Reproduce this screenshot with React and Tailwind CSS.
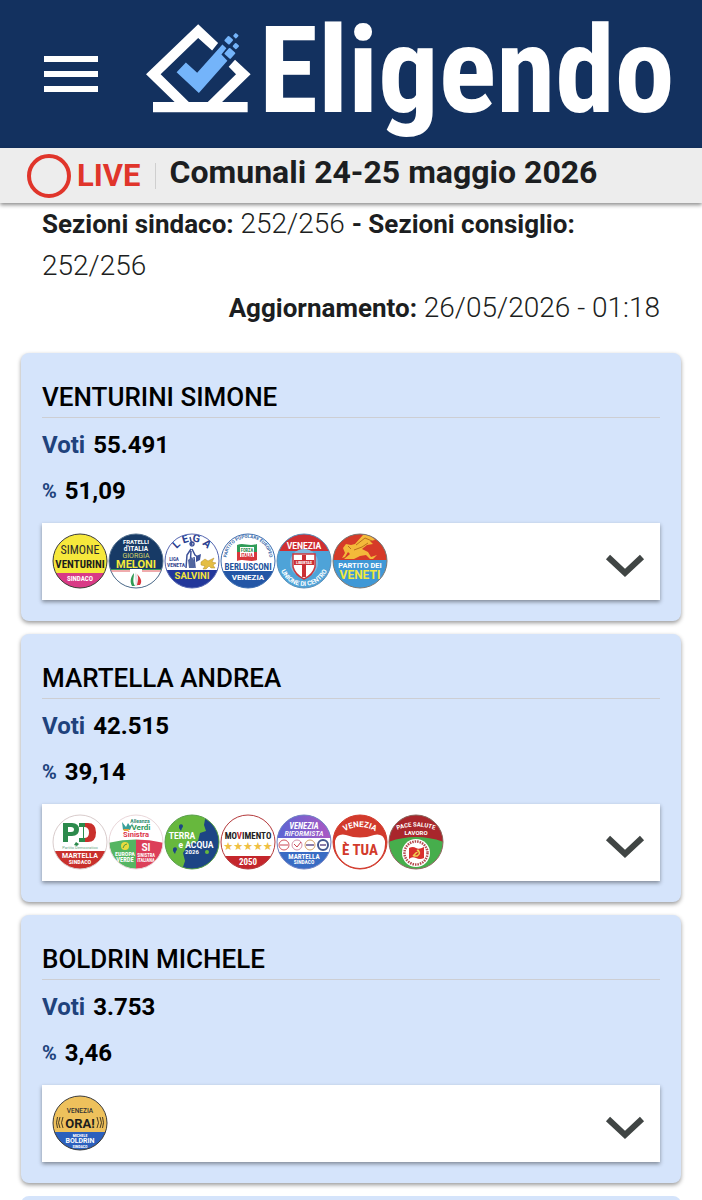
import React, { useState } from 'react';

const NARROW = "'Roboto Condensed', 'Liberation Sans', sans-serif";

// testo centrato dentro un contrassegno
function T({ y, size, fill = '#fff', x = 28, weight = 700, font = NARROW, children }) {
  return (
    <text x={x} y={y} fontSize={size} fill={fill} fontWeight={weight} fontFamily={font} textAnchor="middle">
      {children}
    </text>
  );
}

// testo che segue il bordo del contrassegno
function Arc({ id, d, size, fill, children }) {
  return (
    <>
      <path id={id} d={d} fill="none" />
      <text fontSize={size} fill={fill} fontWeight="700" fontFamily="Roboto, sans-serif" textAnchor="middle">
        <textPath href={`#${id}`} startOffset="50%">{children}</textPath>
      </text>
    </>
  );
}

function Contrassegno({ id, label, bg = '#fff', border, children }) {
  return (
    <svg viewBox="0 0 56 56" className="size-14 shrink-0" role="img" aria-label={label}>
      <clipPath id={`clip-${id}`}>
        <circle cx="28" cy="28" r="27" />
      </clipPath>
      <g clipPath={`url(#clip-${id})`}>
        <rect width="56" height="56" fill={bg} />
        {children}
      </g>
      <circle cx="28" cy="28" r="27" fill="none" stroke={border} strokeWidth="1" />
    </svg>
  );
}

function Venturini() {
  return (
    <Contrassegno id="venturini" label="Simone Venturini Sindaco" bg="#f6e83c" border="#3b3b3b">
      <rect y="40" width="56" height="16" fill="#d93a86" />
      <T y="21" size="12" fill="#2b2b2b" weight={400}>SIMONE</T>
      <T y="35" size="11" fill="#1d1d1d">VENTURINI</T>
      <T y="48" size="7">SINDACO</T>
    </Contrassegno>
  );
}

function Fdi() {
  return (
    <Contrassegno id="fdi" label="Fratelli d'Italia" bg="#173a66" border="#54718f">
      <rect y="36" width="56" height="20" fill="#fff" />
      <path d="M0 36.500h22M34 36.500h22" stroke="#3a9a5b" strokeWidth="1" />
      <path d="M0 38h22M34 38h22" stroke="#e0585a" strokeWidth="1" />
      <path d="M26 40c-4 5-4 9-2 13h3c-3-5-1-8-1-13z" fill="#2f9a54" />
      <path d="M28 39c-3 6 1 8-1 14h3c2-5-1-8-2-14z" fill="#e6e6e6" />
      <path d="M29 41c2 4 1 7 0 11h3c3-4 0-8-3-11z" fill="#d8363d" />
      <T y="11" size="6" font="Roboto, sans-serif">FRATELLI</T>
      <T y="17.500" size="6.500" font="Roboto, sans-serif">d'ITALIA</T>
      <T y="24.500" size="7" fill="#d8d76a" weight={400} font="Roboto, sans-serif">GIORGIA</T>
      <T y="34.500" size="11" fill="#f4ea3a" font="Roboto, sans-serif">MELONI</T>
    </Contrassegno>
  );
}

function Lega() {
  return (
    <Contrassegno id="lega" label="Lega Salvini" border="#5566b0">
      <rect y="37" width="56" height="19" fill="#22379a" />
      <path d="M26 4l2 8M28 13a2 2 0 1 1 .1 0M27 16l-4 6-1 13M28 16l3 6 4 3M30 24l1 11M27 18l-1 16" fill="none" stroke="#3d5198" strokeWidth="1.500" />
      <path d="M24 27l4-3 3 5-1 6h-5z" fill="#52669f" />
      <path d="M32 23l5-2-1 6-4 2z" fill="#3d5198" />
      <path d="M37 29l4-3 3 2 6-3-2 4 4 1-3 2 2 3h-4l-2-2-3 3h-3l2-3-4-1z" fill="#e4be45" stroke="#b68c25" strokeWidth=".5" />
      <Arc id="arc-lega" d="M9.500 22A19.500 19.500 0 0 1 46.500 22" size="11" fill="#2b3f91">L E G A</Arc>
      <T x={10} y="28" size="5" fill="#34478f">LIGA</T>
      <T x={12} y="34" size="5.500" fill="#34478f">VENETA</T>
      <T y="46" size="9.500" fill="#f3e53b" font="Roboto, sans-serif">SALVINI</T>
    </Contrassegno>
  );
}

function ForzaItalia() {
  return (
    <Contrassegno id="fi" label="Forza Italia Berlusconi Venezia" border="#3c6db0">
      <rect y="38" width="56" height="18" fill="#2356a6" />
      <Arc id="arc-fi" d="M7 31A21.500 21.500 0 1 1 49 31" size="4.500" fill="#3466a8">PARTITO POPOLARE EUROPEO</Arc>
      <path d="M17 12c7-3 11 2 20-1v8H17z" fill="#2f9c58" />
      <path d="M17 19h20v8c-8 3-12-2-20 1z" fill="#d8373c" />
      <path d="M20 14h14v10H20z" fill="#fff" />
      <T x={27} y="18.500" size="4.500" fill="#2f8b50">FORZA</T>
      <T x={27} y="23.500" size="4.500" fill="#d8373c">ITALIA</T>
      <T y="36.500" size="9" fill="#24539c">BERLUSCONI</T>
      <T y="47" size="8" font="Roboto, sans-serif">VENEZIA</T>
    </Contrassegno>
  );
}

function Udc() {
  return (
    <Contrassegno id="udc" label="Venezia Unione di Centro" bg="#4ea3d8" border="#5b8fb8">
      <rect width="56" height="18" fill="#cf2e32" />
      <circle cx="28" cy="30" r="14" fill="#7fb9df" />
      <T y="16" size="8.500" font="Roboto, sans-serif">VENEZIA</T>
      <path d="M17 21h22v13q-2 8-11 12-9-4-11-12z" fill="#fff" stroke="#c9383d" strokeWidth="1.500" />
      <path d="M26 22h4v22h-4z" fill="#cc3035" />
      <path d="M18 27h20v5H18z" fill="#cc3035" />
      <T y="31" size="4">LIBERTAS</T>
      <Arc id="arc-udc" d="M3 28A25 25 0 0 0 53 28" size="6.500" fill="#fff">UNIONE DI CENTRO</Arc>
    </Contrassegno>
  );
}

function Veneti() {
  return (
    <Contrassegno id="veneti" label="Partito dei Veneti" bg="#3f98d6" border="#7d7770">
      <rect width="56" height="27" fill="#d63a28" />
      <path d="M10 25l3-5-2-5 3-4 5 1 4-1 8-9c5-1 9 1 12 5l-5 1 3 3-6 1-5 4 6 3 3 5 6-2-4 4H38l-4-4-6 1-6 3H12l6-5-2-2-3 5z" fill="#f3b93a" />
      <path d="M24 12l9-7 7 3M22 17l8-3 6-4M16 13l3 3" fill="none" stroke="#b96d1e" strokeWidth="1" />
      <T y="35" size="7.500" font="Roboto, sans-serif">PARTITO DEI</T>
      <T y="46" size="12" fill="#f1e83c" font="Roboto, sans-serif">VENETI</T>
    </Contrassegno>
  );
}

function Pd() {
  return (
    <Contrassegno id="pd" label="Partito Democratico" border="#d9cccc">
      <rect y="37" width="56" height="19" fill="#c9302c" />
      <path d="M11 28V9h9q7 0 7 6.500T20 22h-4v6zM16 13v5h3q3 0 3-2.500T19 13z" fill="#2c8a4c" fillRule="evenodd" />
      <path d="M27 9h9v19h-9v-4h4V13h-4z" fill="#2c8a4c" />
      <path d="M27 13h4v11h-4z" fill="#fff" />
      <path d="M33 9h3q8 0 8 9.500T36 28h-3z" fill="#c9302c" />
      <path d="M32 13q5 0 5 5.500T32 24z" fill="#fff" />
      <path d="M22 31l2-3 3 2-2 2z" fill="#2c8a4c" />
      <T y="35" size="4" fill="#70a786" weight={400} font="Roboto, sans-serif">Partito Democratico</T>
      <T y="44" size="7" font="Roboto, sans-serif">MARTELLA</T>
      <T y="50" size="6">SINDACO</T>
    </Contrassegno>
  );
}

function Avs() {
  return (
    <Contrassegno id="avs" label="Alleanza Verdi Sinistra" border="#ead7da">
      <rect y="25" width="28" height="31" fill="#55b562" />
      <rect x="28" y="25" width="28" height="31" fill="#dc3f59" />
      <path d="M0 29Q28 22 56 29V22H0z" fill="#fff" />
      <path d="M14 8l4 5 2-4 2 3 3-3-3 7h-7z" fill="#38a09a" />
      <path d="M15 15h7l-2 2h-4z" fill="#e6a23c" />
      <T x={32} y="8.500" size="5" fill="#318c72" font="Roboto, sans-serif">Alleanza</T>
      <T x={33} y="15.500" size="8" fill="#2c985a" font="Roboto, sans-serif">Verdi</T>
      <T x={28} y="23" size="7.500" fill="#dc354c" font="Roboto, sans-serif">Sinistra</T>
      <circle cx="17" cy="32" r="4" fill="#eadb3e" />
      <path d="M15 34q1-4 4-4" fill="none" stroke="#4d9a42" />
      <T x={17} y="41.500" size="6">EUROPA</T>
      <T x={17} y="48" size="6.500">VERDE</T>
      <T x={38} y="37" size="10" font="Roboto, sans-serif">SI</T>
      <T x={38} y="42.500" size="4.500">SINISTRA</T>
      <T x={38} y="47.500" size="4.500">ITALIANA</T>
    </Contrassegno>
  );
}

function TerraAcqua() {
  return (
    <Contrassegno id="terra" label="Terra e Acqua 2026" bg="#67b83d" border="#599f4b">
      <path d="M42 0l-2 11 2 6-6 2-2 8-10 4-5 8 2 8-3 9h40V0z" fill="#1d4585" />
      <path d="M15 12a2 2 0 1 1 3 2l-1 3-2-3zM9 35a2 2 0 1 1 3 2l-1 3-2-3z" fill="#1d4585" />
      <circle cx="43" cy="38" r="2" fill="#67b83d" />
      <T x={18} y="25" size="8.500" font="Roboto, sans-serif">TERRA</T>
      <T x={32} y="33.500" size="8.500" font="Roboto, sans-serif">e ACQUA</T>
      <T x={28} y="39.500" size="6" font="Roboto, sans-serif">2026</T>
    </Contrassegno>
  );
}

function Movimento() {
  return (
    <Contrassegno id="m5s" label="Movimento 2050" border="#b43a3c">
      <rect y="42" width="56" height="14" fill="#c4262c" />
      <T y="25" size="9" fill="#222">MO<tspan fill="#c4262c">V</tspan>IMENTO</T>
      <T y="36" size="11" fill="#efc042" font="'DejaVu Sans', sans-serif">★★★★★</T>
      <T y="51" size="9">2050</T>
    </Contrassegno>
  );
}

function Riformista() {
  return (
    <Contrassegno id="rif" label="Venezia Riformista" bg="#396cc4" border="#7585c4">
      <linearGradient id="grad-rif" x2="1">
        <stop stopColor="#5865d4" />
        <stop offset="1" stopColor="#ad58c3" />
      </linearGradient>
      <rect width="56" height="24" fill="url(#grad-rif)" />
      <rect y="24" width="56" height="14" fill="#fff" />
      <g fontStyle="italic">
        <T y="14.500" size="8.500">VENEZIA</T>
        <T y="22" size="8" weight={500}>RIFORMISTA</T>
      </g>
      <circle cx="8" cy="31" r="5" fill="#fff" stroke="#d35a61" />
      <circle cx="21" cy="31" r="5" fill="#fff" stroke="#d696ac" />
      <circle cx="34" cy="31" r="5" fill="#fff" stroke="#d3a46b" />
      <circle cx="47" cy="31" r="5" fill="#fff" stroke="#44588f" strokeWidth="2" />
      <path d="M4 31h8M18 30l3 3 4-5" fill="none" stroke="#c84454" />
      <path d="M30 31h8M44 31h6" stroke="#68548d" strokeWidth="1.500" />
      <T y="44.500" size="7">MARTELLA</T>
      <T y="50" size="5.500">SINDACO</T>
    </Contrassegno>
  );
}

function ETua() {
  return (
    <Contrassegno id="etua" label="Venezia è tua" bg="#d23a2c" border="#d23a2c">
      <path d="M3 27Q5 19 14 21q14 5 28 0 9-2 11 6v3a25 24 0 0 1-50 0z" fill="#fff" />
      <Arc id="arc-etua" d="M7 21Q28 5 49 21" size="8" fill="#fff">VENEZIA</Arc>
      <T y="41" size="15" fill="#d23a2c">È TUA</T>
    </Contrassegno>
  );
}

function Pace() {
  return (
    <Contrassegno id="pace" label="Pace Salute Lavoro" bg="#46ae4c" border="#8f6660">
      <path d="M0 0h56v28Q28 18 0 28z" fill="#a9262c" />
      <Arc id="arc-pace" d="M4 18Q28 7 52 18" size="6" fill="#fff">PACE SALUTE</Arc>
      <T y="20.500" size="6" font="Roboto, sans-serif">LAVORO</T>
      <circle cx="28" cy="39" r="14" fill="#fff" />
      <circle cx="28" cy="39" r="11.500" fill="none" stroke="#b4494c" strokeWidth="2.500" strokeDasharray="1.500 1" />
      <path d="M21 34q4-2 7 0t8-1v11q-4 2-8 0t-7 1z" fill="#d92f2d" />
      <path d="M25 42l6-6M29 36q5 3 0 6h-3" fill="none" stroke="#f0d050" strokeWidth="1.500" />
    </Contrassegno>
  );
}

function Ora() {
  return (
    <Contrassegno id="ora" label="Venezia Ora!" bg="#eec15c" border="#3b3b3b">
      <rect y="37" width="56" height="19" fill="#2c60bd" />
      <T y="18" size="6.500" fill="#333" weight={500} font="Roboto, sans-serif">VENEZIA</T>
      <T y="32.500" size="13" fill="#1d1d1d" font="Roboto, sans-serif">ORA!</T>
      <path
        d="M11 22q-3 6 0 11M8 22q-3 6 0 11M5.500 22q-2 6 0 11M45 22q3 6 0 11M48 22q3 6 0 11M50.500 22q2 6 0 11"
        fill="none"
        stroke="#4a3d22"
        strokeWidth="1"
      />
      <T y="41.500" size="4">MICHELE</T>
      <T y="47.500" size="7" font="Roboto, sans-serif">BOLDRIN</T>
      <T y="52.500" size="4">SINDACO</T>
    </Contrassegno>
  );
}

const candidati = [
  {
    nome: 'VENTURINI SIMONE',
    voti: '55.491',
    perc: '51,09',
    liste: [Venturini, Fdi, Lega, ForzaItalia, Udc, Veneti],
  },
  {
    nome: 'MARTELLA ANDREA',
    voti: '42.515',
    perc: '39,14',
    liste: [Pd, Avs, TerraAcqua, Movimento, Riformista, ETua, Pace],
  },
  { nome: 'BOLDRIN MICHELE', voti: '3.753', perc: '3,46', liste: [Ora] },
];

function EligendoMark() {
  return (
    <svg viewBox="438 70 316 268" className="h-[89px] w-[105px] shrink-0" aria-hidden="true">
      <path
        d="M595 71L655 127L637 150L595 112L482 221L567 305H624L709 221L687 199L706 178L753 221L667 305H744V336H459V305H524L438 221Z"
        fill="#fff"
      />
      <path d="M530 215L558 186L592 217L668 132L680 143L665 162L683 181L597 278Z" fill="#74b4fa" />
      <g fill="#74b4fa">
        <rect x="678" y="146" width="25" height="25" rx="3" transform="rotate(42 690.500 158.500)" />
        <rect x="677" y="109" width="20" height="20" rx="3" transform="rotate(42 687 119)" />
        <rect x="701" y="129" width="15" height="15" rx="3" transform="rotate(42 708.500 136.500)" />
        <rect x="702" y="99" width="13" height="13" rx="3" transform="rotate(42 708.500 105.500)" />
      </g>
    </svg>
  );
}

function Header() {
  return (
    <header className="flex h-[148px] items-center bg-[#13315f] pl-11">
      <button type="button" aria-label="Menu" className="flex w-[54px] shrink-0 flex-col gap-[9px]">
        <span className="h-1.5 bg-white" />
        <span className="h-1.5 bg-white" />
        <span className="h-1.5 bg-white" />
      </button>
      <a href="#" className="mt-6 ml-12 flex items-end gap-2 self-start text-white">
        <EligendoMark />
        <span className="font-['Roboto_Condensed','Liberation_Sans',sans-serif] text-[120px] leading-[84px] font-bold">
          Eligendo
        </span>
      </a>
    </header>
  );
}

function LiveBar() {
  return (
    <div className="relative flex h-[55px] items-center bg-[#ededed] pl-[27px] shadow-[0_2px_4px_rgba(0,0,0,0.45)]">
      <span className="size-11 shrink-0 rounded-full border-4 border-[#e0352b]" />
      <span className="ml-1.5 text-[31px] leading-10 font-bold text-[#e0352b]">LIVE</span>
      <span className="ml-3.5 h-[26px] w-px bg-[#cfcfcf]" />
      <h1 className="ml-3.5 pb-2 text-[32px] leading-10 font-bold text-[#1c1e21]">Comunali 24-25 maggio 2026</h1>
    </div>
  );
}

function CandidatoCard({ nome, voti, perc, liste }) {
  const [open, setOpen] = useState(false);

  return (
    <article className="rounded-lg bg-[#d5e4fb] px-[21px] pt-[26px] pb-[21px] shadow-[0_2px_4px_rgba(0,0,0,0.4)]">
      <h2 className="border-b border-[#cdced3] pb-0.5 text-[26px] leading-9 font-medium text-black">{nome}</h2>
      <dl className="mt-1 text-2xl leading-[46px] font-bold text-black">
        <div className="flex gap-2">
          <dt className="text-[#20427c]">Voti</dt>
          <dd>{voti}</dd>
        </div>
        <div className="flex gap-2">
          <dt className="text-xl leading-[46px] text-[#20427c]">%</dt>
          <dd>{perc}</dd>
        </div>
      </dl>
      <button
        type="button"
        aria-label={`Liste collegate a ${nome}`}
        aria-expanded={open}
        onClick={() => setOpen(!open)}
        className="mt-[9px] flex h-[77px] w-full items-center bg-white pr-[15px] pb-0.5 pl-2.5 shadow-[0_2px_4px_rgba(0,0,0,0.4)]"
      >
        {liste.map((Lista, i) => (
          <Lista key={i} />
        ))}
        <svg
          viewBox="0 0 40 24"
          className={`mt-2.5 ml-auto h-6 w-10 shrink-0 ${open ? 'rotate-180' : ''}`}
          aria-hidden="true"
        >
          <path d="M3 3l17 16L37 3" fill="none" stroke="#404544" strokeWidth="6" />
        </svg>
      </button>
    </article>
  );
}

export default function App() {
  return (
    <div className="h-screen overflow-hidden bg-white font-[Roboto,sans-serif]">
      <Header />
      <LiveBar />
      <section className="px-[42px] text-[28px] leading-[42px] font-light text-[#1c1e21]">
        <p>
          <b className="text-[26px] font-bold">Sezioni sindaco:</b> 252/256{' '}
          <b className="text-[26px] font-bold">- Sezioni consiglio:</b> 252/256
        </p>
        <p className="text-right">
          <b className="text-[26px] font-bold">Aggiornamento:</b> 26/05/2026 - 01:18
        </p>
      </section>
      <main className="mt-6 flex flex-col gap-[13px] px-[21px]">
        {candidati.map((c) => (
          <CandidatoCard key={c.nome} {...c} />
        ))}
        <div className="h-16 rounded-lg bg-[#d5e4fb]" />
      </main>
    </div>
  );
}
